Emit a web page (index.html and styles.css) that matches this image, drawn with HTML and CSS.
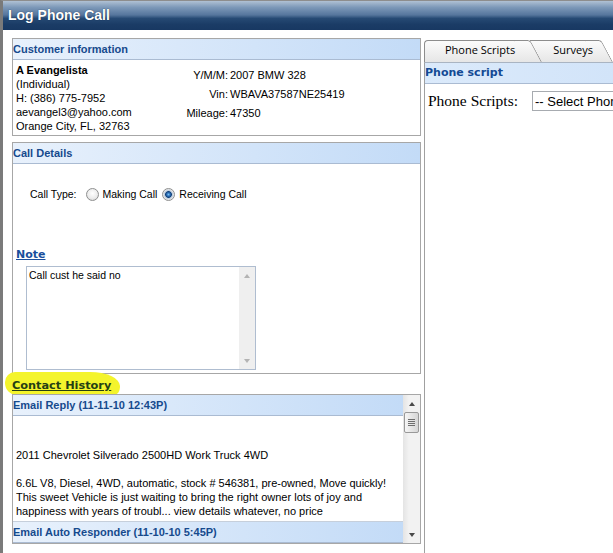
FILE: index.html
```html
<!DOCTYPE html>
<html lang="en">
<head>
<meta charset="utf-8">
<title>Log Phone Call</title>
<link rel="stylesheet" href="styles.css">
</head>
<body>
<div class="window">
  <div class="titlebar">Log Phone Call</div>
  <div class="content">
    <div class="left">
      <section class="box cust">
        <div class="hdr">Customer information</div>
        <div class="cust-body">
          <div class="cust-contact">
            <div class="name">A Evangelista</div>
            <div>(Individual)</div>
            <div>H: (386) 775-7952</div>
            <div>aevangel3@yahoo.com</div>
            <div>Orange City, FL, 32763</div>
          </div>
          <dl class="vehicle">
            <dt>Y/M/M:</dt><dd>2007 BMW 328</dd>
            <dt>Vin:</dt><dd>WBAVA37587NE25419</dd>
            <dt>Mileage:</dt><dd>47350</dd>
          </dl>
        </div>
      </section>

      <section class="box calld">
        <div class="hdr">Call Details</div>
        <div class="call-body">
          <div class="calltype">
            <span class="ct-label">Call Type:</span>
            <label class="radio"><input type="radio" name="ct">Making Call</label>
            <label class="radio"><input type="radio" name="ct" checked>Receiving Call</label>
          </div>
          <div class="note-title">Note</div>
          <div class="note-box">
            <textarea class="note-text">Call cust he said no</textarea>
            <div class="sb sb-off">
              <span class="sb-btn"><span class="arr up"></span></span>
              <span class="sb-fill"></span>
              <span class="sb-btn"><span class="arr down"></span></span>
            </div>
          </div>
        </div>
      </section>

      <div class="ch-title"><span class="hl">Contact History</span></div>

      <div class="box history">
        <div class="hist-list">
          <div class="hdr">Email Reply (11-11-10 12:43P)</div>
          <div class="hist-body"><br><br>2011 Chevrolet Silverado 2500HD Work Truck 4WD<br><br>6.6L V8, Diesel, 4WD, automatic, stock # 546381, pre-owned, Move quickly!<br>This sweet Vehicle is just waiting to bring the right owner lots of joy and<br>happiness with years of troubl... view details whatever, no price</div>
          <div class="hdr hdr-next">Email Auto Responder (11-10-10 5:45P)</div>
        </div>
        <div class="sb">
          <span class="sb-btn"><span class="arr up"></span></span>
          <span class="thumb"><span class="grip"></span></span>
          <span class="sb-fill"></span>
          <span class="sb-btn"><span class="arr down"></span></span>
        </div>
      </div>
    </div>

    <div class="right">
      <div class="tabs">
        <div class="tab active">Phone Scripts</div>
        <div class="tab">Surveys</div>
      </div>
      <div class="panel">
        <div class="hdr hdr-r">Phone script</div>
        <div class="ps-row">
          <label class="ps-label" for="ps">Phone Scripts:</label>
          <select id="ps" class="ps-select"><option>-- Select Phone Script --</option></select>
        </div>
      </div>
    </div>
  </div>
</div>
</body>
</html>
```

FILE: styles.css
```css
html, body {
  margin: 0;
  padding: 0;
}
body {
  width: 613px;
  height: 553px;
  overflow: hidden;
  background: #fff;
  font-family: "Liberation Sans", Arial, sans-serif;
  font-size: 11px;
  color: #000;
}
.window {
  box-sizing: border-box;
  height: 553px;
  border-left: 3px solid #7a7a7a;
  border-top: 1px solid #8d8d8d;
  display: flex;
  flex-direction: column;
}
.titlebar {
  height: 29px;
  line-height: 29px;
  padding-left: 5px;
  color: #fff;
  font-weight: bold;
  font-size: 14px;
  background: linear-gradient(#b0c1d4 0%, #7c98b8 22%, #56769d 48%, #264a74 60%, #1b3c66 80%, #183862 100%);
  text-shadow: 0 0 1px #0c2340;
}
.content {
  flex: 1;
  min-height: 0;
  display: flex;
  gap: 3px;
  padding: 8px 0 0 9px;
}
.left {
  width: 409px;
  flex: none;
  display: flex;
  flex-direction: column;
}
.box {
  box-sizing: border-box;
  border: 1px solid #a7a7a7;
}
.hdr {
  height: 20px;
  line-height: 20px;
  border-bottom: 1px solid #aabbd2;
  background: linear-gradient(to right, #e8f1fc, #c3dbf7);
  color: #164a8d;
  font-weight: bold;
  font-size: 11px;
  padding-left: 0;
  white-space: nowrap;
  overflow: hidden;
}

/* customer */
.cust-body {
  display: grid;
  grid-template-columns: 170px auto;
  padding: 3px 0 2px 3px;
  line-height: 14px;
  height: 70px;
}
.name {
  font-weight: bold;
}
.vehicle {
  display: grid;
  grid-template-columns: 42px auto;
  column-gap: 2px;
  grid-auto-rows: 19px;
  align-items: center;
  margin: 2px 0 0 0;
}
.vehicle dt {
  text-align: right;
  white-space: nowrap;
}
.vehicle dd {
  margin: 0;
  white-space: nowrap;
}

/* call details */
.calld {
  margin-top: 6px;
}
.call-body {
  height: 209px;
  box-sizing: border-box;
  padding: 22px 0 3px 0;
  display: flex;
  flex-direction: column;
}
.calltype {
  display: flex;
  align-items: center;
  height: 16px;
  padding-left: 17px;
  font-size: 10.5px;
}
.ct-label {
  margin-right: 9px;
}
.radio {
  display: inline-flex;
  align-items: center;
  margin-right: 5px;
}
.radio input {
  -webkit-appearance: none;
  appearance: none;
  box-sizing: border-box;
  width: 13px;
  height: 13px;
  margin: 0 4px 0 0;
  border: 1px solid #8e8f8f;
  border-radius: 50%;
  background: radial-gradient(circle at 50% 40%, #ffffff 0, #ececec 55%, #cfcfcf 100%);
  flex: none;
}
.radio input:checked {
  background: radial-gradient(circle, #7cc0f4 0, #2f73ba 1.6px, #11407a 3px, #b9c9da 3.7px, #ededed 5.5px);
}
.note-title {
  margin: 45px 0 0 3px;
  height: 16px;
  line-height: 16px;
  font-family: "DejaVu Sans", Verdana, sans-serif;
  font-weight: bold;
  font-size: 11px;
  color: #1a4f9c;
  text-decoration: underline;
}
.note-box {
  box-sizing: border-box;
  margin: 3px 0 0 13px;
  width: 230px;
  height: 104px;
  border: 1px solid #afbdd0;
  display: flex;
}
.note-text {
  flex: 1;
  min-width: 0;
  border: none;
  outline: none;
  resize: none;
  margin: 0;
  padding: 2px 2px;
  font-family: "Liberation Sans", Arial, sans-serif;
  font-size: 10.5px;
  line-height: 13px;
  color: #000;
  background: #fff;
  overflow: hidden;
}

/* scrollbars */
.sb {
  width: 17px;
  flex: none;
  display: flex;
  flex-direction: column;
  background: linear-gradient(to right, #e4e4e4, #f2f2f2 35%, #f2f2f2);
}
.sb-off {
  width: 16px;
  background: #efefef;
}
.sb-btn {
  height: 17px;
  flex: none;
  display: flex;
  align-items: center;
  justify-content: center;
}
.sb-fill {
  flex: 1;
}
.arr {
  width: 0;
  height: 0;
  border-left: 3.5px solid transparent;
  border-right: 3.5px solid transparent;
}
.arr.up {
  border-bottom: 4px solid #4a4a4a;
}
.arr.down {
  border-top: 4px solid #4a4a4a;
}
.sb-off .arr.up {
  border-bottom-color: #b3b3b3;
}
.sb-off .arr.down {
  border-top-color: #b3b3b3;
}
.thumb {
  box-sizing: border-box;
  height: 21px;
  margin: 0 1px 0 1px;
  border: 1px solid #999;
  border-radius: 2px;
  background: linear-gradient(to right, #f6f6f6, #e2e2e2 60%, #d6d6d6);
  display: flex;
  align-items: center;
  justify-content: center;
  flex: none;
}
.grip {
  width: 7px;
  height: 7px;
  background: repeating-linear-gradient(#6e6e6e 0 1px, transparent 1px 2px);
}

/* contact history */
.ch-title {
  height: 20px;
}
.hl {
  display: inline-block;
  margin: -2px 0 0 -7px;
  padding: 5px 9px 1px 7px;
  line-height: 17px;
  background: #f4f42c;
  border-radius: 10px 30px 6px 12px / 10px 14px 8px 12px;
  font-family: "DejaVu Sans", Verdana, sans-serif;
  font-weight: bold;
  font-size: 11.3px;
  color: #253f14;
  text-decoration: underline;
}
.history {
  height: 150px;
  display: flex;
}
.hist-list {
  flex: 1;
  min-width: 0;
  overflow: hidden;
  display: flex;
  flex-direction: column;
}
.hist-body {
  height: 105px;
  box-sizing: border-box;
  padding: 4px 0 3px 3px;
  line-height: 14px;
  white-space: nowrap;
  overflow: hidden;
}
.hdr-next {
  border-top: 1px solid #c6cfdb;
}

/* right panel */
.right {
  flex: 1;
  min-width: 0;
  overflow: hidden;
  display: flex;
  flex-direction: column;
  padding-top: 2px;
}
.tabs {
  display: flex;
  height: 22px;
  flex: none;
}
.tab {
  position: relative;
  z-index: 2;
  box-sizing: border-box;
  height: 22px;
  line-height: 20px;
  padding: 0 27px 0 21px;
  font-family: "Open Sans", "Noto Sans", sans-serif;
  font-size: 11px;
  color: #000;
  white-space: nowrap;
}
.tab::before {
  content: "";
  position: absolute;
  top: 0;
  bottom: 0;
  left: 0;
  right: 14px;
  border-top: 1px solid #8d8d8d;
  border-left: 1px solid #8d8d8d;
  border-top-left-radius: 4px;
  background: linear-gradient(#fbfbfb, #e6e6e6);
  z-index: -1;
}
.tab::after {
  content: "";
  position: absolute;
  top: 0;
  bottom: 0;
  right: 0;
  width: 16px;
  border-top: 1px solid #8d8d8d;
  border-right: 1px solid #8d8d8d;
  border-top-right-radius: 3px;
  background: linear-gradient(#fbfbfb, #e6e6e6);
  transform: skewX(28deg);
  transform-origin: bottom right;
  z-index: -1;
}
.tab + .tab {
  z-index: 1;
  margin-left: -12px;
  padding: 0 20px 0 23px;
}
.tab + .tab::before {
  border-left: none;
  border-radius: 0;
}
.panel {
  flex: 1;
  border-left: 1px solid #a0a0a0;
  border-top: 1px solid #a9b4c2;
}
.hdr-r {
  font-family: "DejaVu Sans", Verdana, sans-serif;
  font-size: 11px;
  color: #144a94;
  background: linear-gradient(to right, #dbeafb, #d2e4f9);
  padding-left: 0;
}
.ps-row {
  display: flex;
  align-items: center;
  padding: 7px 0 0 3px;
  height: 20px;
}
.ps-label {
  width: 104px;
  flex: none;
  font-family: "Liberation Serif", "Times New Roman", serif;
  font-size: 15.5px;
  white-space: nowrap;
}
.ps-select {
  -webkit-appearance: none;
  appearance: none;
  flex: none;
  box-sizing: border-box;
  width: 160px;
  height: 20px;
  margin: 0;
  padding: 0 0 0 2px;
  border: 1px solid #a7abb0;
  border-radius: 0;
  background: #fff;
  font-family: "Liberation Sans", Arial, sans-serif;
  font-size: 13px;
  color: #000;
}
```
